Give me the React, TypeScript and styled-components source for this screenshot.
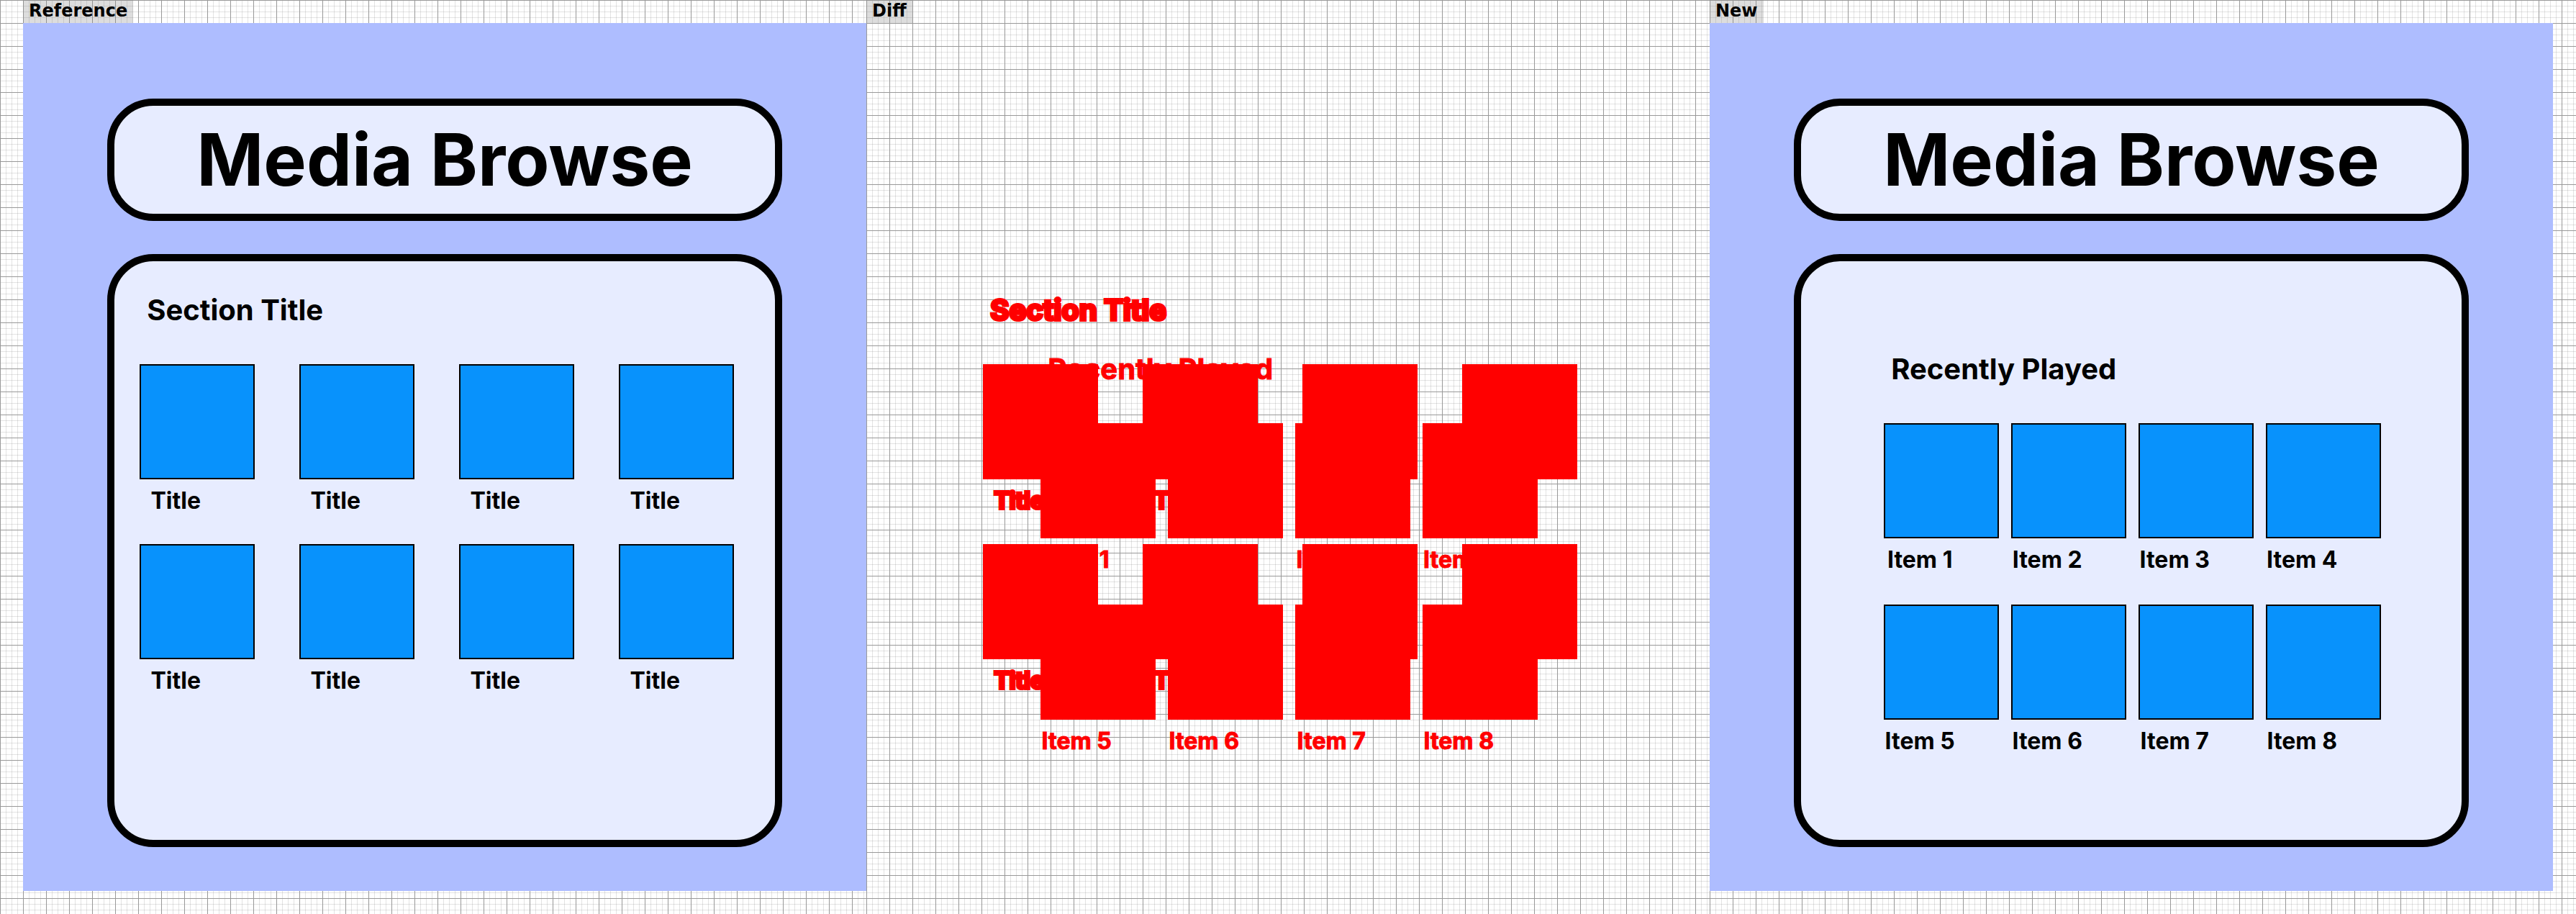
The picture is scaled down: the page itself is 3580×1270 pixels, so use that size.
import React from "react";
import styled, { createGlobalStyle, css } from "styled-components";

const colors = {
  backdrop: "#aebdff",
  card: "#e7ecff",
  tile: "#0892fc",
  ink: "#000000",
  changed: "#ff0000",
};

const GlobalStyle = createGlobalStyle`
  *, *::before, *::after { box-sizing: border-box; }
  body { margin: 0; background: #ffffff; font-family: Inter, "Liberation Sans", sans-serif; }
  h1, h2, p, ul, figure { margin: 0; padding: 0; }
`;

const Page = styled.main`
  display: grid;
  grid-template-columns: 32px repeat(3, minmax(0, 1fr)) 32px;
  min-height: 100vh;
`;

type Slot = "first" | "middle" | "last";

const slotStyles = {
  first: css`
    grid-column: 1 / 3;
    padding-left: 32px;
  `,
  middle: css`
    grid-column: 3 / 4;
  `,
  last: css`
    grid-column: 4 / 6;
    padding-right: 32px;
  `,
};

/* Graph paper: light lines every 8px, dark lines every 32px. */
const Pane = styled.figure<{ $slot: Slot }>`
  display: flex;
  flex-direction: column;
  padding-bottom: 32px;
  background-color: #ffffff;
  background-image:
    linear-gradient(to right, #999999 1px, transparent 1px),
    linear-gradient(to bottom, #999999 1px, transparent 1px),
    linear-gradient(to right, rgba(128, 128, 128, 0.22) 1px, transparent 1px),
    linear-gradient(to bottom, rgba(128, 128, 128, 0.22) 1px, transparent 1px);
  background-size: 32px 32px, 32px 32px, 8px 8px, 8px 8px;
  ${({ $slot }) => slotStyles[$slot]}
`;

const PaneLabel = styled.figcaption`
  align-self: flex-start;
  height: 32px;
  padding: 0 8px;
  background: rgba(128, 128, 128, 0.27);
  color: ${colors.ink};
  font: bold 24px/30px "DejaVu Sans", sans-serif;
`;

const Stack = styled.div`
  flex: 1;
  display: grid;
  grid-template: minmax(0, 1fr) / minmax(0, 1fr);
`;

const SceneFrame = styled.div<{ $mask: boolean }>`
  grid-area: 1 / 1;
  display: flex;
  flex-direction: column;
  gap: 46px;
  padding: 105px 10% 61px;
  color: ${({ $mask }) => ($mask ? colors.changed : colors.ink)};
  background: ${({ $mask }) => ($mask ? "transparent" : colors.backdrop)};
`;

const Card = styled.div<{ $mask: boolean }>`
  border: 10px solid ${({ $mask }) => ($mask ? "transparent" : colors.ink)};
  border-radius: 64px;
  background: ${({ $mask }) => ($mask ? "transparent" : colors.card)};
`;

const TitleCard = styled(Card)`
  display: flex;
  align-items: center;
  justify-content: center;
  min-height: 170px;
`;

const AppTitle = styled.h1`
  font-size: 100px;
  font-weight: 700;
  line-height: 120px;
  white-space: nowrap;
`;

const ContentCard = styled(Card)<{ $top: number; $side: number }>`
  flex: 1;
  padding: ${({ $top, $side }) => `${$top}px ${$side}px 44px`};
`;

const SectionTitle = styled.h2<{ $outline: number }>`
  margin-bottom: 51px;
  padding-left: 10px;
  font-size: 40px;
  font-weight: 700;
  line-height: 48px;
  -webkit-text-stroke: ${({ $outline }) => $outline}px currentColor;
`;

const Tiles = styled.ul<{ $columnGap: number; $rowGap: number }>`
  display: grid;
  grid-template-columns: repeat(4, 160px);
  gap: ${({ $rowGap, $columnGap }) => `${$rowGap}px ${$columnGap}px`};
  list-style: none;
`;

const Thumb = styled.div<{ $mask: boolean }>`
  height: 160px;
  margin-bottom: 10px;
  border: 2px solid ${({ $mask }) => ($mask ? colors.changed : colors.ink)};
  background: ${({ $mask }) => ($mask ? colors.changed : colors.tile)};
`;

const TileName = styled.p<{ $outline: number }>`
  width: 100px;
  font-size: 32px;
  font-weight: 700;
  line-height: 40px;
  text-align: center;
  white-space: nowrap;
  -webkit-text-stroke: ${({ $outline }) => $outline}px currentColor;
`;

interface Library {
  section: string;
  items: string[];
  top: number;
  side: number;
  columnGap: number;
  rowGap: number;
  outline: number;
}

const placeholderLibrary: Library = {
  section: "Section Title",
  items: Array.from({ length: 8 }, () => "Title"),
  top: 44,
  side: 35,
  columnGap: 62,
  rowGap: 40,
  outline: 4,
};

const recentLibrary: Library = {
  section: "Recently Played",
  items: Array.from({ length: 8 }, (_, i) => `Item ${i + 1}`),
  top: 126,
  side: 115,
  columnGap: 17,
  rowGap: 42,
  outline: 1,
};

function Scene({ library, mask = false }: { library: Library; mask?: boolean }) {
  const outline = mask ? library.outline : 0;
  return (
    <SceneFrame $mask={mask}>
      <TitleCard $mask={mask}>{!mask && <AppTitle>Media Browse</AppTitle>}</TitleCard>
      <ContentCard $mask={mask} $top={library.top} $side={library.side}>
        <SectionTitle $outline={outline}>{library.section}</SectionTitle>
        <Tiles $columnGap={library.columnGap} $rowGap={library.rowGap}>
          {library.items.map((name, index) => (
            <li key={index}>
              <Thumb $mask={mask} />
              <TileName $outline={outline}>{name}</TileName>
            </li>
          ))}
        </Tiles>
      </ContentCard>
    </SceneFrame>
  );
}

export default function App() {
  return (
    <>
      <GlobalStyle />
      <Page>
        <Pane $slot="first">
          <PaneLabel>Reference</PaneLabel>
          <Stack>
            <Scene library={placeholderLibrary} />
          </Stack>
        </Pane>
        <Pane $slot="middle">
          <PaneLabel>Diff</PaneLabel>
          <Stack>
            <Scene library={placeholderLibrary} mask />
            <Scene library={recentLibrary} mask />
          </Stack>
        </Pane>
        <Pane $slot="last">
          <PaneLabel>New</PaneLabel>
          <Stack>
            <Scene library={recentLibrary} />
          </Stack>
        </Pane>
      </Page>
    </>
  );
}
